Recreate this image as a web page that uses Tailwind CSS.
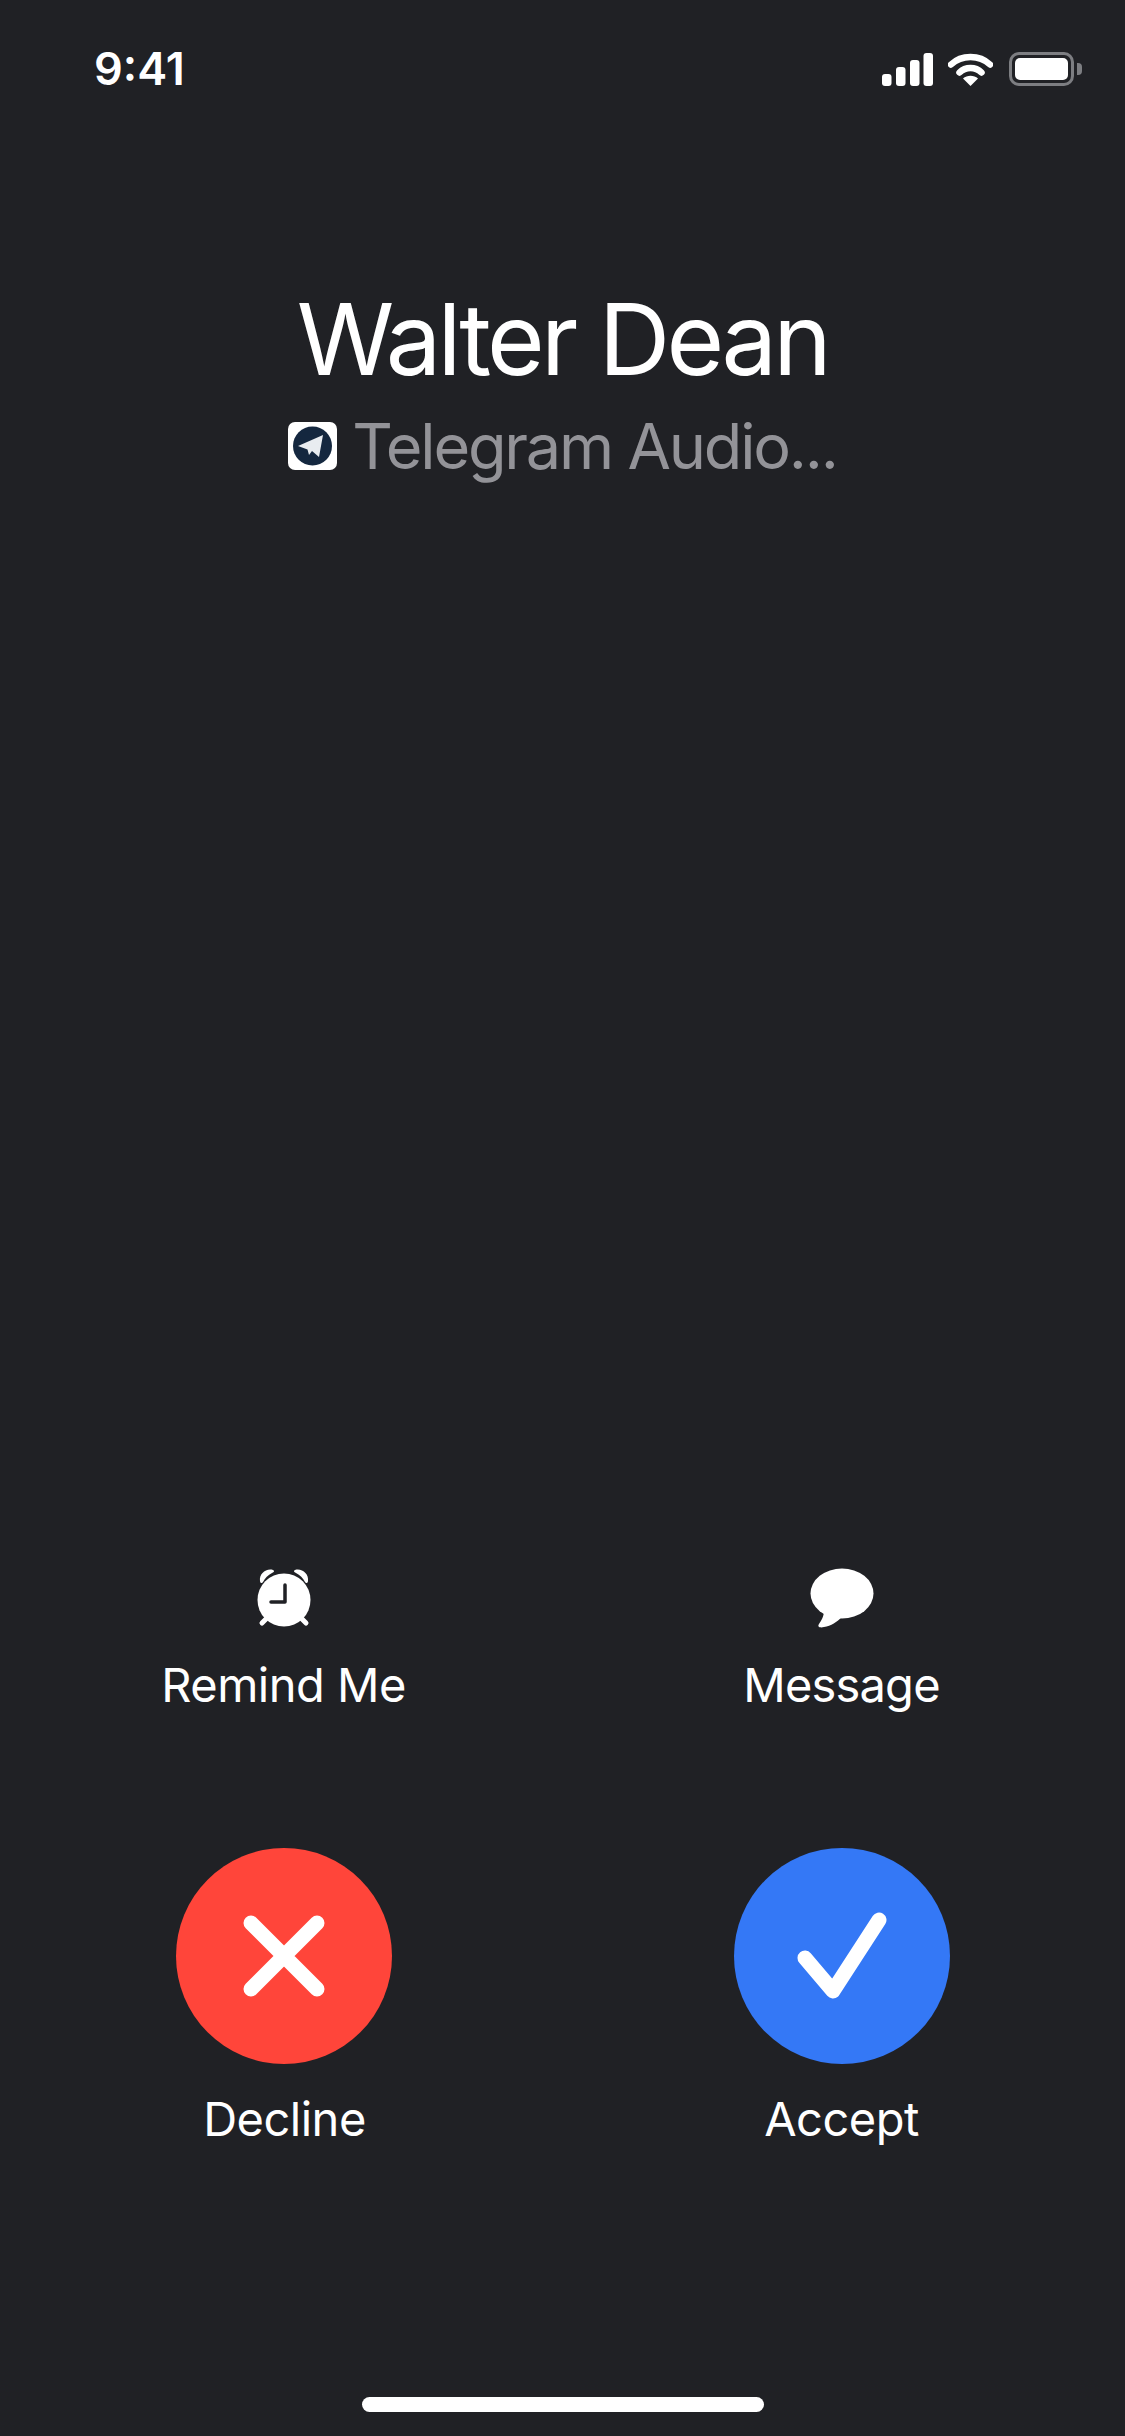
<!DOCTYPE html>
<html lang="en">
<head>
    <meta charset="UTF-8">
    <meta name="viewport" content="width=device-width, initial-scale=1.0">
    <title>Incoming call</title>
    <script src="https://cdn.jsdelivr.net/npm/@tailwindcss/browser@4"></script>
</head>
<body class="bg-[#202125]">
    <div class="flex flex-col w-[1125px] h-[2436px] bg-[#202125] text-white font-['Inter',sans-serif] overflow-hidden">

        <!-- status bar -->
        <div class="flex items-center justify-between h-[34px] mt-[52px] pl-[94px] pr-[43px]">
            <span class="text-[45px] leading-[34px] font-semibold">9:41</span>
            <div class="flex items-center">
                <svg class="w-[51px] h-[33px]" viewBox="0 0 51 33" fill="#fff">
                    <rect x="0" y="21" width="9.5" height="12" rx="3"/>
                    <rect x="14" y="14" width="9.5" height="19" rx="3"/>
                    <rect x="28" y="7" width="9.5" height="26" rx="3"/>
                    <rect x="41.5" y="0" width="9.5" height="33" rx="3"/>
                </svg>
                <svg class="w-[45px] h-[34px] ml-[15px]" viewBox="0 0 45 34" fill="none" stroke="#fff">
                    <path d="M3 12.5C13.5 2.5 31.5 2.5 42 12.5" stroke-width="6.5" stroke-linecap="round"/>
                    <path d="M11.5 20.5C17.5 14.5 27.5 14.5 33.5 20.5" stroke-width="6.5" stroke-linecap="round"/>
                    <path d="M22.5 34L15 26.5C19 22.8 26 22.8 30 26.5Z" fill="#fff" stroke="none"/>
                </svg>
                <div class="flex items-center ml-[16px]">
                    <div class="flex w-[65px] h-[34px] p-[3px] rounded-[10px] border-[3px] border-[#7d7e82]">
                        <div class="flex-1 bg-white rounded-[5px]"></div>
                    </div>
                    <div class="w-[5px] h-[12px] ml-[3px] bg-[#7d7e82] rounded-r-[4px]"></div>
                </div>
            </div>
        </div>

        <!-- caller -->
        <div class="flex flex-col items-center mt-[203px]">
            <h1 class="text-[99px] leading-[100px] font-normal tracking-[-3.7px] whitespace-nowrap">Walter Dean</h1>
            <div class="flex items-center mt-[22px]">
                <svg class="w-[49px] h-[48px]" viewBox="0 0 49 48">
                    <rect width="49" height="48" rx="7" fill="#fff"/>
                    <circle cx="24.5" cy="24" r="19.5" fill="#14273f"/>
                    <path d="M10 24L35 13L31 35L24 29L21 33L19.5 27.5Z" fill="#e8ecf0"/>
                </svg>
                <span class="ml-[15px] text-[63px] leading-[70px] text-[#939398] tracking-[-2.2px] whitespace-nowrap">Telegram Audio...</span>
            </div>
        </div>

        <!-- actions -->
        <div class="flex justify-center gap-[342px] mt-auto">
            <div class="flex flex-col items-center w-[216px]">
                <svg class="w-[54px] h-[60px]" viewBox="0 0 54 60">
                    <circle cx="27" cy="32" r="26.5" fill="#fff"/>
                    <path d="M3 13C2 6 9 0 16 2C18 3 17 4 15 5C11 7 8 10 6 14C5 16 3 15 3 13Z" fill="#fff"/>
                    <path d="M51 13C52 6 45 0 38 2C36 3 37 4 39 5C43 7 46 10 48 14C49 16 51 15 51 13Z" fill="#fff"/>
                    <path d="M10 50L5 55M44 50L49 55" stroke="#fff" stroke-width="5" stroke-linecap="round"/>
                    <path d="M28 17V34H14" fill="none" stroke="#202125" stroke-width="3.5" stroke-linecap="round" stroke-linejoin="round"/>
                </svg>
                <span class="mt-[32px] text-[47px] leading-[50px] tracking-[-0.5px] whitespace-nowrap">Remind Me</span>
            </div>
            <div class="flex flex-col items-center w-[216px]">
                <svg class="w-[64px] h-[60px]" viewBox="0 0 64 60">
                    <ellipse cx="32" cy="25.5" rx="31.5" ry="25" fill="#fff"/>
                    <path d="M14 42C14 49 11 53 9 56C7 59 10 60 14 59C21 58 27 54 32 49Z" fill="#fff"/>
                </svg>
                <span class="mt-[32px] text-[47px] leading-[50px] tracking-[-0.8px] whitespace-nowrap">Message</span>
            </div>
        </div>

        <div class="flex justify-center gap-[342px] mt-[138px]">
            <div class="flex flex-col items-center w-[216px]">
                <div class="flex items-center justify-center w-[216px] h-[216px] rounded-full bg-[#ff453a]">
                    <svg class="w-[82px] h-[82px]" viewBox="0 0 82 82">
                        <path d="M8 8L74 74M74 8L8 74" stroke="#fff" stroke-width="15" stroke-linecap="round"/>
                    </svg>
                </div>
                <span class="mt-[30px] ml-[2px] text-[47px] leading-[50px] tracking-[-0.5px] whitespace-nowrap">Decline</span>
            </div>
            <div class="flex flex-col items-center w-[216px]">
                <div class="flex items-center justify-center w-[216px] h-[216px] rounded-full bg-[#3478f6]">
                    <svg class="w-[90px] h-[88px]" viewBox="0 0 90 88">
                        <path d="M8 46L36 79L82 8" fill="none" stroke="#fff" stroke-width="15" stroke-linecap="round" stroke-linejoin="round"/>
                    </svg>
                </div>
                <span class="mt-[30px] text-[47px] leading-[50px] tracking-[-0.5px] whitespace-nowrap">Accept</span>
            </div>
        </div>

        <!-- home indicator -->
        <div class="w-[402px] h-[15px] mt-[253px] mb-[24px] mx-auto bg-white rounded-full"></div>
    </div>
</body>
</html>
